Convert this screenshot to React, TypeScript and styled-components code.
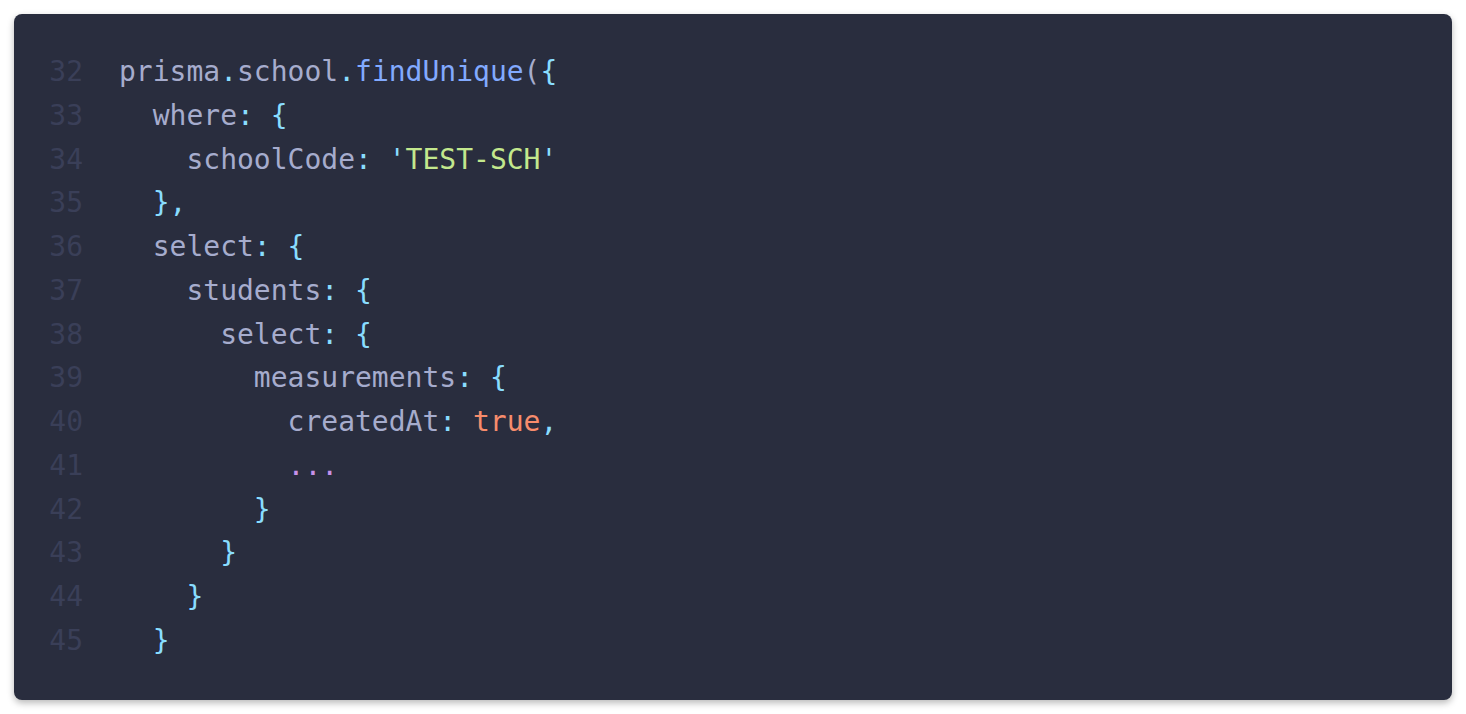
import React from "react";
import styled, { createGlobalStyle } from "styled-components";

const Global = createGlobalStyle`
  html, body { margin: 0; padding: 0; background: #ffffff; }
  body { padding: 14px; }
`;

const Card = styled.div`
  box-sizing: border-box;
  width: 1438px;
  height: 686px;
  background: #292d3e;
  border-radius: 8px;
  box-shadow: 0 3px 7px rgba(0, 0, 0, 0.28);
  padding: 36px 35px;
  font-family: "DejaVu Sans Mono", "Liberation Mono", monospace;
  font-size: 28px;
  line-height: 43.77px;
`;

const Row = styled.div`
  display: grid;
  grid-template-columns: 34px 1fr;
  column-gap: 36px;
  white-space: pre;
`;

const Num = styled.span`
  color: #3a3f58;
  text-align: right;
`;

const Code = styled.span``;

type Kind = "p" | "f" | "c" | "s" | "b" | "m";
const colors: Record<Kind, string> = {
  p: "#a6accd",
  f: "#82aaff",
  c: "#89ddff",
  s: "#c3e88d",
  b: "#f78c6c",
  m: "#c792ea",
};

const Tok = styled.span<{ $k: Kind }>`
  color: ${(p) => colors[p.$k]};
`;

type T = [Kind, string];
const lines: T[][] = [
  [["p", "prisma"], ["c", "."], ["p", "school"], ["c", "."], ["f", "findUnique"], ["p", "("], ["c", "{"]],
  [["p", "  where"], ["c", ":"], ["p", " "], ["c", "{"]],
  [["p", "    schoolCode"], ["c", ":"], ["p", " "], ["c", "'"], ["s", "TEST-SCH"], ["c", "'"]],
  [["p", "  "], ["c", "},"]],
  [["p", "  select"], ["c", ":"], ["p", " "], ["c", "{"]],
  [["p", "    students"], ["c", ":"], ["p", " "], ["c", "{"]],
  [["p", "      select"], ["c", ":"], ["p", " "], ["c", "{"]],
  [["p", "        measurements"], ["c", ":"], ["p", " "], ["c", "{"]],
  [["p", "          createdAt"], ["c", ":"], ["p", " "], ["b", "true"], ["c", ","]],
  [["p", "          "], ["m", "..."]],
  [["p", "        "], ["c", "}"]],
  [["p", "      "], ["c", "}"]],
  [["p", "    "], ["c", "}"]],
  [["p", "  "], ["c", "}"]],
];

export default function App() {
  return (
    <>
      <Global />
      <Card>
        {lines.map((toks, i) => (
          <Row key={i}>
            <Num>{32 + i}</Num>
            <Code>
              {toks.map(([k, t], j) => (
                <Tok key={j} $k={k}>
                  {t}
                </Tok>
              ))}
            </Code>
          </Row>
        ))}
      </Card>
    </>
  );
}
